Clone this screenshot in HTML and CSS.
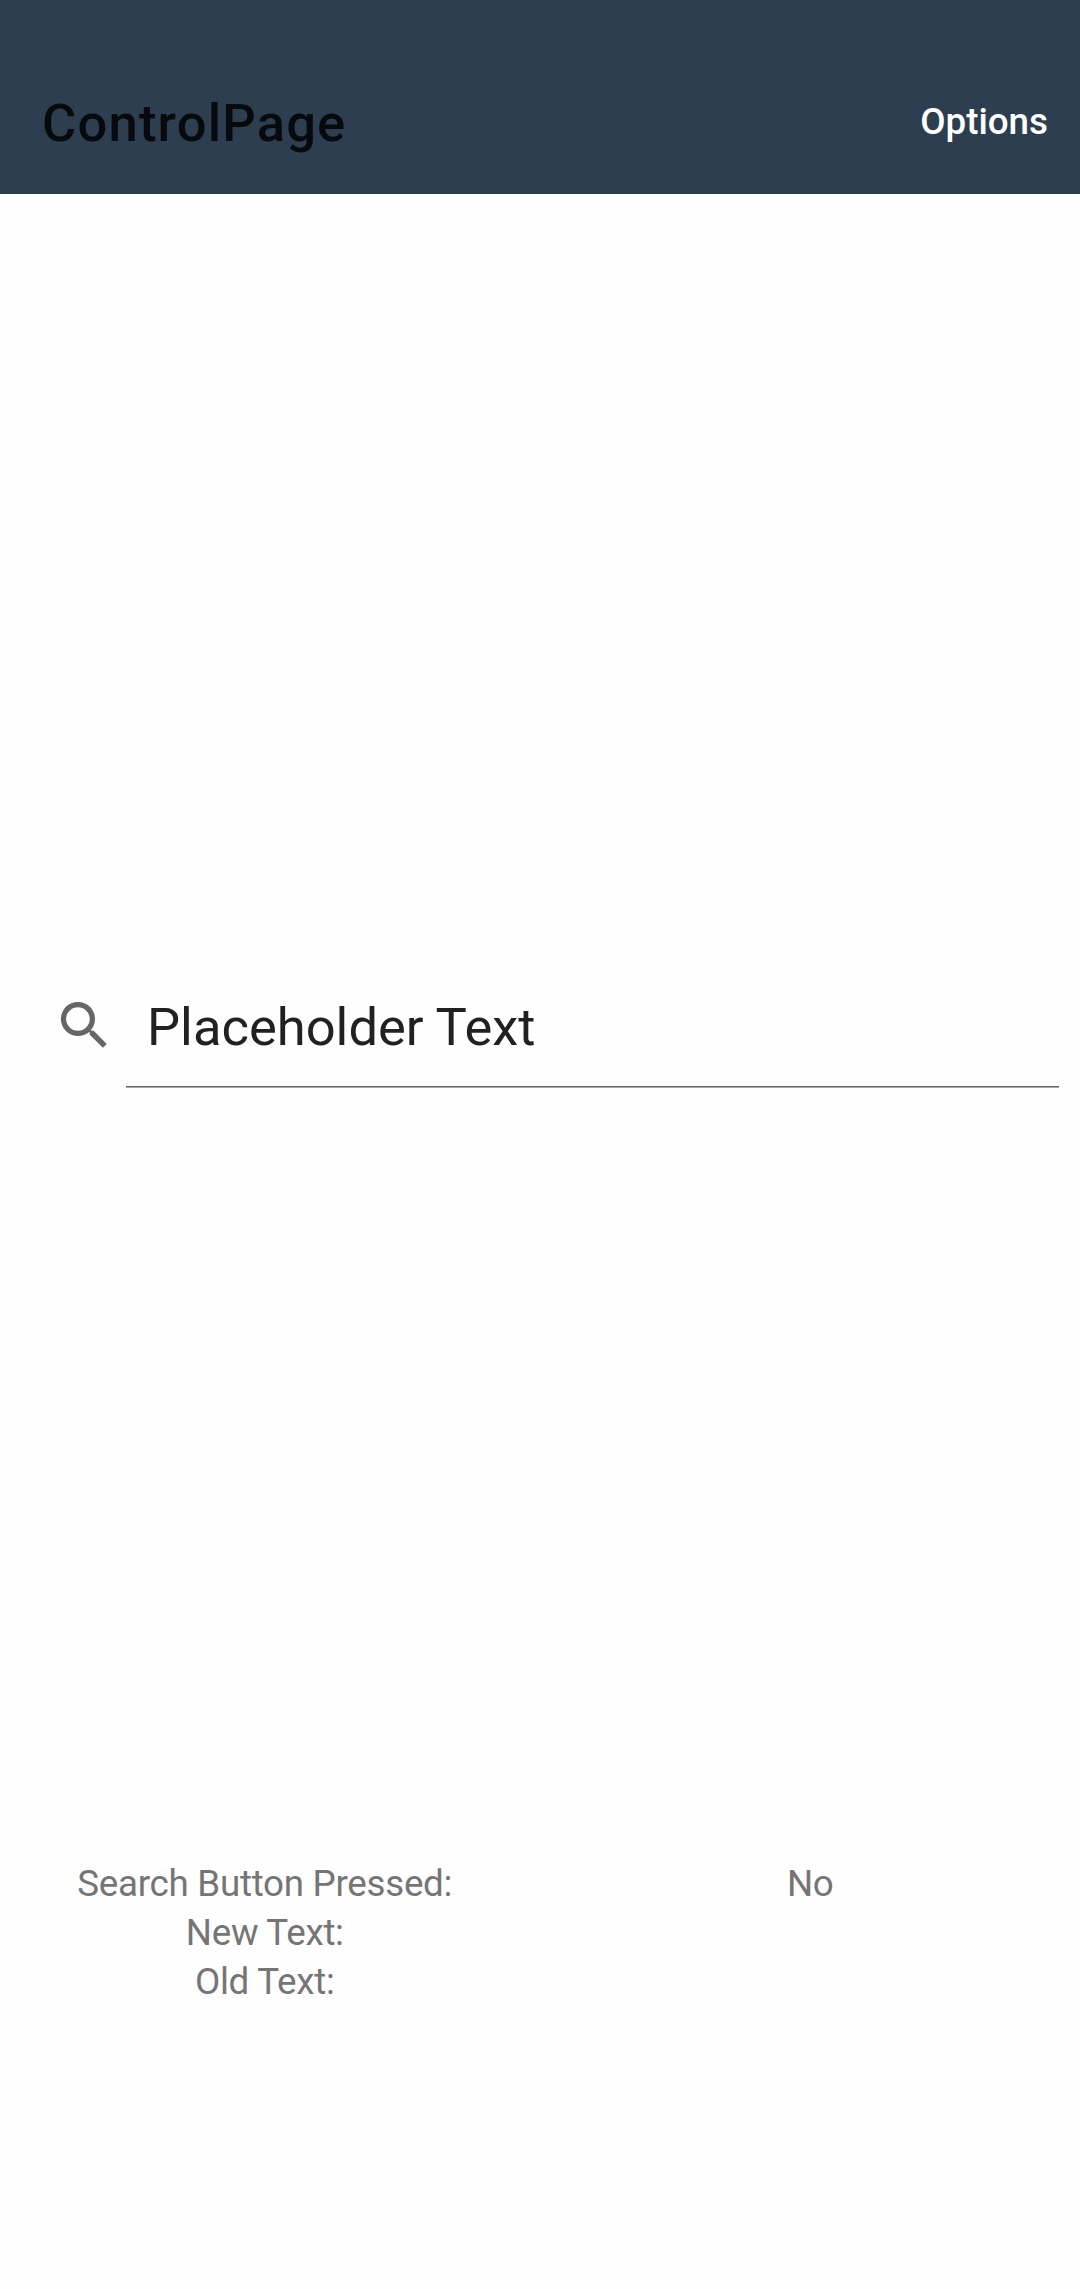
FILE: index.html
```html
<!DOCTYPE html>
<html lang="en">
<head>
<meta charset="utf-8">
<title>ControlPage</title>
<link rel="stylesheet" href="styles.css">
</head>
<body>
<header class="bar">
  <h1 class="title">ControlPage</h1>
  <span class="options">Options</span>
</header>
<main class="content">
  <section class="search-area">
    <div class="search">
      <svg class="icon" viewBox="0 0 24 24"><path d="M15.5 14h-.79l-.28-.27A6.471 6.471 0 0 0 16 9.500 6.500 6.500 0 1 0 9.500 16c1.610 0 3.090-.59 4.230-1.570l.27.28v.79l5 4.990L20.490 19l-4.990-5zm-6 0C7.010 14 5 11.990 5 9.500S7.010 5 9.500 5 14 7.010 14 9.500 11.990 14 9.500 14z"/></svg>
      <div class="field">Placeholder Text</div>
    </div>
  </section>
  <section class="status">
    <span>Search Button Pressed:</span><span>No</span>
    <span>New Text:</span><span></span>
    <span>Old Text:</span><span></span>
  </section>
</main>
</body>
</html>
```
FILE: styles.css
```css
body {
  margin: 0;
  background: #fefefe;
  font-family: Roboto, "Liberation Sans", sans-serif;
}
.bar {
  display: flex;
  align-items: center;
  justify-content: space-between;
  box-sizing: border-box;
  height: 194px;
  padding: 50px 32px 0 42px;
  background: #2c3e50;
}
.title {
  margin: 2px 0 0;
  font-size: 52.5px;
  font-weight: 500;
  letter-spacing: 1.2px;
  color: #070a0d;
}
.options {
  margin-bottom: 2px;
  font-size: 36.75px;
  font-weight: 500;
  color: #fff;
}
.search-area {
  padding: 776px 21px 0 53px;
}
.search {
  display: flex;
  align-items: flex-start;
  gap: 10px;
}
.icon {
  width: 63px;
  height: 63px;
  margin-top: 24px;
  fill: #666;
}
.field {
  flex: 1;
  box-sizing: border-box;
  height: 118px;
  padding-left: 21px;
  border-bottom: 1px solid #a6a6a6;
  box-shadow: inset 0 -1px #666;
  font-size: 52.5px;
  line-height: 114px;
  color: #212121;
}
.status {
  display: grid;
  grid-template-columns: 1fr 1fr;
  grid-auto-rows: 49px;
  padding: 771px 0 0;
  margin: 0 -3px 0 -8px;
  font-size: 36.75px;
  letter-spacing: -0.28px;
  line-height: 49px;
  text-align: center;
  color: #757575;
}
```
